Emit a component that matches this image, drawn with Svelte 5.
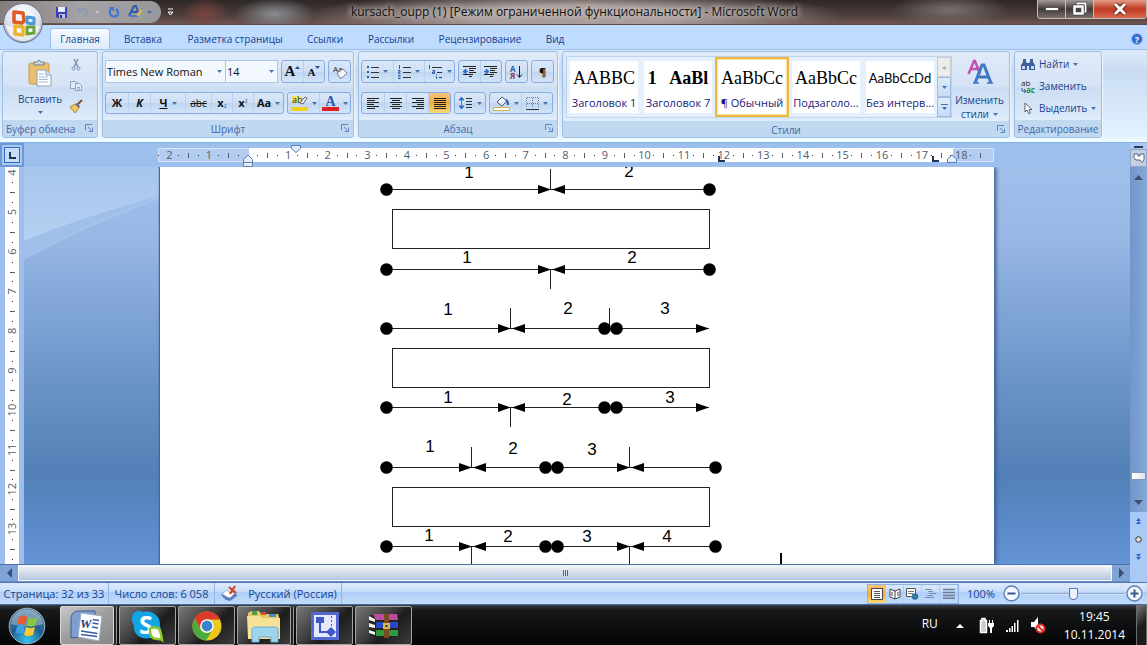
<script>
  const tabs = [
    { name: 'Главная', w: 60 },
    { name: 'Вставка', w: 62 },
    { name: 'Разметка страницы', w: 118 },
    { name: 'Ссылки', w: 58 },
    { name: 'Рассылки', w: 70 },
    { name: 'Рецензирование', w: 104 },
    { name: 'Вид', w: 42 }
  ];
  let active = $state('Главная');

  const styles = [
    { sample: 'AABBC', label: 'Заголовок 1', cls: 'serif' },
    { sample: '1   AaBl', label: 'Заголовок 7', cls: 'serif bold' },
    { sample: 'AaBbCc', label: '¶ Обычный', cls: 'serif', on: true },
    { sample: 'AaBbCc', label: 'Подзаголо...', cls: 'serif' },
    { sample: 'AaBbCcDd', label: 'Без интерв...', cls: 'sans' }
  ];

  const CM = 39.6;
  const ZERO = 90.5;
  const marks = (from, to) => {
    const out = [];
    for (let q = from * 4; q <= to * 4; q++) {
      const kind = q % 4 === 0 ? 'num' : q % 2 === 0 ? 'bar' : 'dot';
      if (q !== 0) out.push({ v: q / 4, kind });
    }
    return out;
  };
  const hMarks = marks(-2.25, 18.5);
  const vMarks = marks(4, 13.75);

  const figure = [
    {
      box: 209, top: 189, bottom: 269,
      dots: [386, 709], ticksUp: [551], ticksDown: [551],
      lines: [[386, 709]],
      right: [551], left: [551],
      up: [[469, 178, 1], [629, 177, 2]],
      down: [[467, 263, 1], [632, 263, 2]]
    },
    {
      box: 348, top: 328, bottom: 407,
      dots: [386, 604, 616], ticksUp: [511, 610], ticksDown: [511],
      lines: [[386, 709]],
      right: [511, 709], left: [511],
      up: [[448, 315, 1], [568, 314, 2], [665, 314, 3]],
      down: [[448, 403, 1], [567, 405, 2], [670, 403, 3]]
    },
    {
      box: 487, top: 467, bottom: 546,
      dots: [386, 545, 557, 715], ticksUp: [472, 630], ticksDown: [472, 630],
      lines: [[386, 715]],
      right: [472, 630], left: [472, 630],
      up: [[430, 452, 1], [513, 454, 2], [592, 455, 3]],
      down: [[429, 541, 1], [508, 542, 2], [587, 542, 3], [667, 542, 4]]
    }
  ];

  const apps = ['word', 'skype', 'chrome', 'explorer', 'editor', 'winrar'];
  let zoom = $state(100);
</script>

{#snippet caret()}
  <svg class="caret" width="5" height="3" viewBox="0 0 5 3"><path d="M0 0h5L2.500 3z" fill="#4673b0" /></svg>
{/snippet}

{#snippet launcher(label)}
  <button class="launch" aria-label={label}>
    <svg width="8" height="8" viewBox="0 0 8 8" fill="none" stroke="#5a86bf"><path d="M.5 6V.5H7M3 3l3.500 3.500M7.500 3.500v4h-4" /></svg>
  </button>
{/snippet}

{#snippet lines(rows, color = '#222')}
  <svg width="14" height="14" viewBox="0 0 14 14" stroke={color} shape-rendering="crispEdges">
    {#each rows as r, i}
      <line x1={r[0]} x2={r[1]} y1={i * 2 + 2.5} y2={i * 2 + 2.5} />
    {/each}
  </svg>
{/snippet}

<div class="app">
  <header class="title">
    <div class="quick">
      <button aria-label="Сохранить"><svg width="13" height="13" viewBox="0 0 13 13"><path d="M1 1h11v11H2l-1-1z" fill="#3c41b4" /><path d="M3 1h7v5H3z" fill="#e8ecfa" /><path d="M4 8h6v4H4z" fill="#b9c3e8" /><path d="M5 9h2v3H5z" fill="#2c2f80" /></svg></button>
      <button aria-label="Отменить"><svg width="14" height="12" viewBox="0 0 14 12"><path d="M3 5c3-3 8-2 8 1 0 2-2 4-4 5" fill="none" stroke="#8b9bb8" stroke-width="2" /><path d="M1 1v6h6z" fill="#8b9bb8" /></svg></button>
      <svg class="dim" width="5" height="3" viewBox="0 0 5 3"><path d="M0 0h5L2.500 3z" fill="#c4c6cc" /></svg>
      <button aria-label="Повторить"><svg width="12" height="12" viewBox="0 0 12 12"><path d="M3 3C0 7 3 11 6.500 10.500 11 10 11 5 8 3" fill="none" stroke="#3f78d0" stroke-width="2.200" /><path d="M1 1h5v5z" fill="#3f78d0" /></svg></button>
      <button aria-label="Стиль"><svg width="15" height="14" viewBox="0 0 15 14"><path d="M1 11L6 1h2l3 9M4 7h6" fill="none" stroke="#2f5caa" stroke-width="2" /><path d="M0 10h8l6-7 1 1-6 8H2z" fill="#4d7cc8" /><path d="M8 10l5-6 2 1-4 6z" fill="#e0b55a" /></svg></button>
      <svg class="near" width="5" height="3" viewBox="0 0 5 3"><path d="M0 0h5L2.500 3z" fill="#3f6db8" /></svg>
    </div>
    <button class="more" aria-label="Настройка панели"><svg width="7" height="8" viewBox="0 0 7 8"><path d="M1 1h5M1 4h5L3.500 7z" stroke="#fff" fill="#456" /></svg></button>
    <h1>kursach_oupp (1) [Режим ограниченной функциональности] - Microsoft Word</h1>
    <div class="winbtns">
      <button aria-label="Свернуть"><svg width="14" height="6" viewBox="0 0 14 6"><path d="M.5 1.500h13v3H.5z" fill="#fff" stroke="#555" /></svg></button>
      <button aria-label="Развернуть"><svg width="15" height="14" viewBox="0 0 15 14" fill="none"><path d="M5.500 3V1.500h8v8H12" stroke="#444" stroke-width="3.500" /><path d="M5.500 3V1.500h8v8H12" stroke="#fff" stroke-width="1.800" /><path d="M2.500 4.500h8v7h-8z" fill="#444" stroke="#444" stroke-width="4" /><path d="M2.500 4.500h8v7h-8z" stroke="#fff" stroke-width="2.500" /></svg></button>
      <button class="close" aria-label="Закрыть"><svg width="14" height="12" viewBox="0 0 14 12"><path d="M2 1l10 10M12 1L2 11" stroke="#6a1c14" stroke-width="5" /><path d="M2 1l10 10M12 1L2 11" stroke="#fff" stroke-width="3" /></svg></button>
    </div>
  </header>

  <button class="orb" aria-label="Кнопка Office">
    <svg width="42" height="42" viewBox="0 0 42 42">
      <defs>
        <radialGradient id="ob" cx=".5" cy=".3" r=".7"><stop offset="0" stop-color="#fff" /><stop offset=".6" stop-color="#dfe3ec" /><stop offset="1" stop-color="#9aa6bb" /></radialGradient>
      </defs>
      <circle cx="21" cy="21" r="19.500" fill="url(#ob)" stroke="#66748c" />
      <path d="M4 23c8 4 26 4 34 0-1 9-8 16-17 16S5 32 4 23z" fill="#fff" opacity=".7" />
      <g fill="none" stroke-width="3.500" stroke-linejoin="round">
        <path d="M21 11l-9-1v10l8 1 2-2z" stroke="#de5a26" />
        <path d="M25 15l7 1v6l-7-1z" stroke="#4a9ad8" stroke-width="3" />
        <path d="M13 24l8 1v8l-8-1z" stroke="#edb52f" />
        <path d="M25 25h7v6l-7 1z" stroke="#6aa43c" stroke-width="3" />
      </g>
    </svg>
  </button>

  <nav class="tabs">
    {#each tabs as t}
      <button class:on={t.name === active} style:flex-basis="{t.w}px" onclick={() => (active = t.name)}>{t.name}</button>
    {/each}
    <button class="help" aria-label="Справка"><svg width="12" height="12" viewBox="0 0 12 12"><circle cx="6" cy="6" r="5.500" fill="#2f6bd0" stroke="#9bb8e4" /><text x="6" y="9.500" font-size="9" font-weight="700" text-anchor="middle" fill="#fff">?</text></svg></button>
  </nav>

  <section class="ribbon">
    <div class="group clip">
      <div class="body">
        <button class="big">
          <svg width="26" height="28" viewBox="0 0 26 28"><rect x="2" y="4" width="20" height="21" rx="2" fill="#eac06c" stroke="#c89a48" /><path d="M7 6V3h3l2-2 2 2h3v3z" fill="#cdd3dc" stroke="#77808e" /><path d="M10 11h9l5 5v11H10z" fill="#fbfcff" stroke="#93a0b8" /><path d="M19 11v5h5" fill="#dbe3f2" stroke="#93a0b8" /><path d="M12 15h5M12 18h9M12 20.500h9M12 23h9" stroke="#a9b6cf" /></svg>
          <span>Вставить</span>
          {@render caret()}
        </button>
        <div class="stack">
          <button aria-label="Вырезать"><svg width="10" height="12" viewBox="0 0 10 12" fill="none" stroke="#7f93b3"><path d="M3 0l4 8M7 0L3 8" stroke-width="1.500" /><circle cx="2.500" cy="9.500" r="1.500" /><circle cx="7.500" cy="9.500" r="1.500" /></svg></button>
          <button aria-label="Копировать"><svg width="14" height="12" viewBox="0 0 14 12" fill="#e4ecf8" stroke="#8ea4c6"><path d="M1.500 1.500h5l2 2v5h-7z" /><path d="M6.500 3.500h4l2 2v5h-6z" /><path d="M8 7.500h3M8 9h3" /></svg></button>
          <button aria-label="Формат по образцу"><svg width="14" height="13" viewBox="0 0 14 13"><path d="M1 7l5-3 4 4-4 5z" fill="#efc75c" stroke="#b58a30" /><path d="M6 4l2-1 3 3-1 2z" fill="#5f6bb0" /><path d="M9 4l4-4" stroke="#7d4c25" stroke-width="2" /></svg></button>
        </div>
      </div>
      <footer>Буфер обмена{@render launcher('Буфер обмена')}</footer>
    </div>

    <div class="group font">
      <div class="body rows">
        <div class="row">
          <div class="combo">
            <select class="face" aria-label="Шрифт"><option>Times New Roman</option></select>
            <select class="size" aria-label="Размер шрифта"><option>14</option></select>
          </div>
          <div class="bar">
            <button class="w21 srf" aria-label="Увеличить размер">A<svg width="5" height="3" viewBox="0 0 5 3"><path d="M0 3h5L2.500 0z" fill="#2c4f94" /></svg></button>
            <button class="w21 srf sm" aria-label="Уменьшить размер">A<svg width="5" height="3" viewBox="0 0 5 3"><path d="M0 0h5L2.500 3z" fill="#2c4f94" /></svg></button>
          </div>
          <div class="bar"><button class="w21" aria-label="Очистить формат"><svg width="16" height="14" viewBox="0 0 16 14"><text x="1" y="7" font-size="8" fill="#222">Aa</text><path d="M5 8l6-4 4 4-5 5H8z" fill="#f4f6fc" stroke="#6f7fa8" /></svg></button></div>
        </div>
        <div class="row">
          <div class="bar">
            <button class="w22"><b>Ж</b></button>
            <button class="w22"><b><i>К</i></b></button>
            <button class="w35"><b><u>Ч</u></b>{@render caret()}</button>
            <button class="w26"><s>abc</s></button>
            <button class="w21" aria-label="Подстрочный"><b>x</b><sub>₂</sub></button>
            <button class="w21" aria-label="Надстрочный"><b>x</b><sub>²</sub></button>
            <button class="w30"><b>Aa</b>{@render caret()}</button>
          </div>
          <div class="bar">
            <button class="w31" aria-label="Цвет выделения"><svg width="17" height="16" viewBox="0 0 17 16"><path d="M0 1h11v7H0z" fill="#f7e36a" /><text x="1" y="8" font-size="9" fill="#222">ab</text><path d="M9 8l5-6 2 1-4 6z" fill="#fff" stroke="#55607e" /><path d="M0 12h17v4H0z" fill="#f0d020" /></svg>{@render caret()}</button>
            <button class="w31" aria-label="Цвет текста"><svg width="17" height="16" viewBox="0 0 17 16"><text x="8.500" y="11" font-size="14" font-weight="700" text-anchor="middle" font-family="Liberation Serif, serif" fill="#2c5aa8">A</text><path d="M0 12h17v4H0z" fill="#e02020" /></svg>{@render caret()}</button>
          </div>
        </div>
      </div>
      <footer>Шрифт{@render launcher('Шрифт')}</footer>
    </div>

    <div class="group para">
      <div class="body rows">
        <div class="row">
          <div class="bar">
            <button class="w31" aria-label="Маркеры"><svg width="12" height="13" viewBox="0 0 12 13" shape-rendering="crispEdges"><path d="M0 1h2v2H0zM0 6h2v2H0zM0 11h2v2H0z" fill="#2c5aa8" /><path d="M4 2.500h8M4 7.500h8M4 12.500h8" stroke="#333" /></svg>{@render caret()}</button>
            <button class="w31" aria-label="Нумерация"><svg width="13" height="14" viewBox="0 0 13 14"><path d="M1.500 0v4M0 5.500h2v1.500H.5v1.500H2.500M0 10.500h2.500M.5 12h2M0 13.500h2.500" stroke="#2c5aa8" fill="none" /><path d="M5 2.500h8M5 7.500h8M5 12.500h8" stroke="#333" shape-rendering="crispEdges" /></svg>{@render caret()}</button>
            <button class="w30" aria-label="Многоуровневый список"><svg width="15" height="14" viewBox="0 0 15 14"><path d="M1.500 0v4M4.500 5.500h2v3h-2V7h2M8.500 9.500v1M8.500 11.500v2.500" stroke="#2c5aa8" fill="none" /><path d="M4 2.500h10M9 7.500h5M11 12.500h3" stroke="#333" shape-rendering="crispEdges" /></svg>{@render caret()}</button>
          </div>
          <div class="bar">
            {#each [{ l: 'Уменьшить отступ', d: 'M5 6.500H1M3 4v5L0 6.500z' }, { l: 'Увеличить отступ', d: 'M0 6.500h4M2 4v5l3-2.500z' }] as b}
              <button class="w21" aria-label={b.l}><svg width="14" height="13" viewBox="0 0 14 13"><path d="M0 1.500h13M6 3.500h7M6 5.500h5M6 7.500h7M0 9.500h10M6 11.500h3" stroke="#222" shape-rendering="crispEdges" /><path d={b.d} fill="#2c6bd0" stroke="#2c6bd0" /></svg></button>
            {/each}
          </div>
          <div class="bar"><button class="w21" aria-label="Сортировка"><svg width="13" height="16" viewBox="0 0 13 16"><text x="0" y="8" font-size="8" font-weight="700" fill="#2c5aa8">А</text><text x="0" y="15" font-size="8" font-weight="700" fill="#9c3a3a">Я</text><path d="M9.500 2v11M7 10.500l2.500 3 2.500-3" stroke="#222" fill="none" /></svg></button></div>
          <div class="bar"><button class="w21"><b>¶</b></button></div>
        </div>
        <div class="row">
          <div class="bar">
            <button class="w22" aria-label="По левому краю">{@render lines([[1, 13], [1, 9], [1, 13], [1, 8], [1, 13], [1, 9]])}</button>
            <button class="w22" aria-label="По центру">{@render lines([[1, 13], [3, 11], [1, 13], [3, 11], [1, 13], [3, 11]])}</button>
            <button class="w22" aria-label="По правому краю">{@render lines([[1, 13], [5, 13], [1, 13], [6, 13], [1, 13], [5, 13]])}</button>
            <button class="w22 hot" aria-label="По ширине">{@render lines([[1, 13], [1, 13], [1, 13], [1, 13], [1, 13], [1, 13]])}</button>
          </div>
          <div class="bar"><button class="w30" aria-label="Интервал"><svg width="14" height="14" viewBox="0 0 14 14"><path d="M2.500 2v10M0 4l2.500-3L5 4zM0 10l2.500 3L5 10z" fill="#2c6bd0" stroke="#2c6bd0" stroke-width=".8" /><path d="M7 2.500h6M7 5.500h6M7 8.500h6M7 11.500h6" stroke="#333" shape-rendering="crispEdges" /></svg>{@render caret()}</button></div>
          <div class="bar">
            <button class="w31" aria-label="Заливка"><svg width="17" height="15" viewBox="0 0 17 15"><path d="M4 6l5-5 5 4-5 5z" fill="#eef2fb" stroke="#44506e" /><path d="M13 4c2 1 2 3 2 5" stroke="#2c5aa8" fill="none" stroke-width="2" /><path d="M.5 11.500h16v3H.5z" fill="#fff" stroke="#d0b448" /></svg>{@render caret()}</button>
            <button class="w31" aria-label="Границы"><svg width="13" height="13" viewBox="0 0 13 13" shape-rendering="crispEdges"><path d="M1 .5h11M1 6.500h11M.5 1v10M6.500 1v10M12.500 1v10" stroke="#6c7c9c" stroke-dasharray="1 1" /><path d="M0 12.500h13" stroke="#333" /></svg>{@render caret()}</button>
          </div>
        </div>
      </div>
      <footer>Абзац{@render launcher('Абзац')}</footer>
    </div>

    <div class="group styles">
      <div class="body">
        <div class="gallery">
          {#each styles as s}
            <button class="card" class:sel={s.on}>
              <span class="sample {s.cls}">{s.sample}</span>
              <span class="name">{s.label}</span>
            </button>
          {/each}
          <div class="gscroll">
            <button class="off" aria-label="Вверх"><svg width="5" height="3" viewBox="0 0 5 3"><path d="M0 3h5L2.500 0z" fill="#a5a9b0" /></svg></button>
            <button aria-label="Вниз">{@render caret()}</button>
            <button aria-label="Все стили"><svg width="7" height="6" viewBox="0 0 7 6"><path d="M0 0h7v1H0zM1 3h5L3.500 6z" fill="#4673b0" /></svg></button>
          </div>
        </div>
        <button class="big change">
          <svg width="26" height="26" viewBox="0 0 26 26" fill="none"><path d="M1.500 15L7 2h1l5 13M4 10h7" stroke="#c44fb0" stroke-width="2.500" /><path d="M8 24L15 6h2l7 18M11 18h10" stroke="#3f78c4" stroke-width="3" /><path d="M6 24h6M20 24h6" stroke="#3f78c4" stroke-width="1.500" /></svg>
          <span>Изменить</span>
          <span>стили {@render caret()}</span>
        </button>
      </div>
      <footer>Стили{@render launcher('Стили')}</footer>
    </div>

    <div class="group edit">
      <div class="body list">
        <button><svg width="14" height="12" viewBox="0 0 14 12" fill="#3e5f9c"><path d="M2 1h3v3l1 1h2l1-1V1h3v3l2 3v5H8V8H6v4H0V7l2-3z" /><path d="M1 8h3v3H1zM10 8h3v3h-3z" fill="#c6d8f2" /></svg>Найти {@render caret()}</button>
        <button><svg width="14" height="13" viewBox="0 0 14 13"><text x="0" y="6" font-size="8" fill="#222">ab</text><text x="5" y="13" font-size="8" font-weight="700" fill="#2f8a3c">ac</text><path d="M1 8v3h3M3 9l2 2-2 2" stroke="#2c5aa8" fill="none" /></svg>Заменить</button>
        <button><svg width="14" height="13" viewBox="0 0 14 13"><path d="M4 1v9l2-2 2 4 1.500-1L8 7.500h3z" fill="#fff" stroke="#5a6478" /></svg>Выделить {@render caret()}</button>
      </div>
      <footer>Редактирование</footer>
    </div>
  </section>

  <div class="work">
    <main>
      <div class="hruler">
        <button class="corner" aria-label="Тип табуляции"><span><svg width="7" height="7" viewBox="0 0 7 7"><path d="M1 0v6h6" fill="none" stroke="#1e3355" stroke-width="2" /></svg></span></button>
        <svg width="838" height="24" viewBox="0 0 838 24">
          <rect x=".5" y="5.500" width="835" height="13" fill="#b2cdf1" stroke="#d5e4f8" />
          <rect x="91" y="5" width="704" height="14" fill="#fff" />
          {#each hMarks as m}
            {@const x = ZERO + m.v * CM}
            {#if m.kind === 'num'}
              <text {x} y="16" text-anchor="middle">{Math.abs(m.v)}</text>
            {:else if m.kind === 'bar'}
              <rect x={Math.round(x) - 1} y="10" width="1" height="5" fill="#555b6a" />
            {:else}
              <rect x={Math.round(x) - 1} y="12" width="1" height="1" fill="#333" />
            {/if}
          {/each}
          <path d="M133.500 2.500h9v3l-4.500 4-4.500-4z" class="mk" />
          <path d="M90 12l4.500 4.500v7h-9v-7zM85.500 19.500h9" class="mk" />
          <path d="M794 12l4.500 4v3.500h-9V16z" class="mk" />
          <path d="M561 13v5h6M775 13v5h6" fill="none" stroke="#1e3355" stroke-width="2" />
        </svg>
      </div>
      <div class="canvas">
        <div class="vruler">
          <svg width="14" height="100%">
            {#each vMarks as m}
              {@const y = 5.5 + (m.v - 4) * CM}
              {#if m.kind === 'num'}
                <text x="11" {y} text-anchor="middle" transform="rotate(-90 11 {y})">{m.v}</text>
              {:else if m.kind === 'bar'}
                <rect x="5" y={Math.round(y)} width="5" height="1" fill="#555b6a" />
              {:else}
                <rect x="7" y={Math.round(y)} width="1" height="1" fill="#333" />
              {/if}
            {/each}
          </svg>
        </div>
        <div class="desk">
          <svg class="swoosh" width="136" height="200" viewBox="0 0 136 200">
            <defs><linearGradient id="sw" x1="0" y1="0" x2="0" y2="1"><stop offset="0" stop-color="#aac7ec" /><stop offset="1" stop-color="#bdd6f5" /></linearGradient></defs>
            <path d="M0 0h136v29C88 42 44 56 0 74z" fill="url(#sw)" opacity=".8" />
            <path d="M0 74C44 56 88 42 136 29v3C88 50 44 68 0 92z" fill="#a4c2ea" opacity=".7" />
            <path d="M0 92C44 68 88 48 136 31" fill="none" stroke="#aac8ee" />
          </svg>
          <article class="page">
            <svg width="834" height="397" viewBox="160 167 834 397">
              {#each figure as f}
                <rect x="392.500" y={f.box + 0.5} width="317" height="39" fill="none" stroke="#222" />
                {#each [{ y: f.top, t: f.ticksUp, d: -20, n: f.up }, { y: f.bottom, t: f.ticksDown, d: 20, n: f.down }] as r}
                  {#each f.lines as l}<path d="M{l[0]} {r.y + 0.5}H{l[1]}" stroke="#222" />{/each}
                  {#each r.t as x}<path d="M{x - 0.5} {r.y}v{r.d}" stroke="#222" />{/each}
                  {#each f.dots as x}<circle cx={x + 0.5} cy={r.y + 0.5} r="6.300" />{/each}
                  {#each f.right as x}<path d="M{x} {r.y + 0.5}l-13-4.500v9z" />{/each}
                  {#each f.left as x}<path d="M{x + 1} {r.y + 0.5}l13-4.500v9z" />{/each}
                  {#each r.n as n}<text x={n[0]} y={n[1]} text-anchor="middle">{n[2]}</text>{/each}
                {/each}
              {/each}
              <rect x="780" y="553" width="2" height="11" />
            </svg>
          </article>
        </div>
      </div>
      <div class="hscroll">
        <button aria-label="Влево"><svg width="5" height="10" viewBox="0 0 5 10"><path d="M5 0v10L0 5z" fill="#3a4d72" /></svg></button>
        <div class="hthumb"><i></i><i></i><i></i></div>
        <button aria-label="Вправо"><svg width="5" height="10" viewBox="0 0 5 10"><path d="M0 0v10l5-5z" fill="#3a4d72" /></svg></button>
      </div>
    </main>
    <aside>
      <div class="split"></div>
      <button class="toggle" aria-label="Линейка"><svg width="12" height="11" viewBox="0 0 12 11"><path d="M1 1h4v2h2V1h4v6L9 9.500 7 7H3L1 5z" fill="#fff" stroke="#56627c" /></svg></button>
      <div class="vtrack">
        <button aria-label="Вверх"><svg width="9" height="5" viewBox="0 0 9 5"><path d="M0 5h9L4.500 0z" fill="#3f4f74" /></svg></button>
        <div class="vthumb"></div>
        <button aria-label="Вниз"><svg width="9" height="5" viewBox="0 0 9 5"><path d="M0 0h9L4.500 5z" fill="#3f4f74" /></svg></button>
      </div>
      <div class="browse">
        <button aria-label="Предыдущая страница"><svg width="5" height="6" viewBox="0 0 5 6"><path d="M0 3h5L2.500 0zM0 6h5L2.500 3z" fill="#2f62c4" /></svg></button>
        <button aria-label="Выбор объекта"><svg width="7" height="7" viewBox="0 0 7 7"><circle cx="3.500" cy="3.500" r="2.800" fill="#ddd" stroke="#333" /></svg></button>
        <button aria-label="Следующая страница"><svg width="5" height="6" viewBox="0 0 5 6"><path d="M0 0h5L2.500 3zM0 3h5L2.500 6z" fill="#2f62c4" /></svg></button>
      </div>
    </aside>
  </div>

  <div class="status">
    <button class="s1">Страница: 32 из 33</button>
    <button class="s2">Число слов: 6 058</button>
    <button class="s3" aria-label="Правописание"><svg width="17" height="16" viewBox="0 0 17 16"><path d="M0 9l5-3 4 2 6-1 1 3-7 5-4-1z" fill="#5a7fc0" /><path d="M1 8l5-4 3 3 6-1-6 6-3-1z" fill="#fff" stroke="#8395b8" stroke-width=".7" /><path d="M8 1l7 6M14 0L9 8" stroke="#dc3c1c" stroke-width="2" /></svg></button>
    <button class="s4">Русский (Россия)</button>
    <div class="views">
      <button class="hot" aria-label="Разметка страницы"><svg width="12" height="12" viewBox="0 0 12 12"><path d="M.5.5h11v11H.5z" fill="#fff" stroke="#444" /><path d="M3 3.500h6M3 5.500h6M3 7.500h6M3 9.500h6" stroke="#555" /></svg></button>
      <button aria-label="Режим чтения"><svg width="12" height="12" viewBox="0 0 12 12" fill="#fff" stroke="#444"><path d="M6 3L1 1v8l5 2 5-2V1zM6 3v8M3 4v4M9 4v4" /></svg></button>
      <button aria-label="Веб-документ"><svg width="13" height="12" viewBox="0 0 13 12"><path d="M.5.5h9v8h-9z" fill="#fff" stroke="#555" /><path d="M2 3.500h6M2 5.500h5" stroke="#777" /><circle cx="9" cy="8.500" r="3.200" fill="#2f6bb0" /><path d="M7 8l2-1 2 3H9z" fill="#3aa04a" /></svg></button>
      <button aria-label="Структура"><svg width="11" height="11" viewBox="0 0 11 11" stroke="#7b8ca8"><path d="M0 1.500h7M3 3.500h5M4 5.500h7M2 7.500h6M0 9.500h9" /></svg></button>
      <button aria-label="Черновик"><svg width="12" height="11" viewBox="0 0 12 11" stroke="#6c7c98" stroke-width="1.500"><path d="M0 1.500h12M0 4.500h12M0 7.500h12M0 10.200h12" /></svg></button>
    </div>
    <button class="pct">{zoom}%</button>
    <button class="rnd" aria-label="Уменьшить"><svg width="17" height="17" viewBox="0 0 17 17"><circle cx="8.500" cy="8.500" r="7.500" fill="#f2f6fd" stroke="#5b7fb5" stroke-width="1.300" /><path d="M4.500 8.500h8" stroke="#3b5a8c" stroke-width="2" /></svg></button>
    <input type="range" min="0" max="200" bind:value={zoom} aria-label="Масштаб" />
    <button class="rnd" aria-label="Увеличить"><svg width="17" height="17" viewBox="0 0 17 17"><circle cx="8.500" cy="8.500" r="7.500" fill="#f2f6fd" stroke="#5b7fb5" stroke-width="1.300" /><path d="M4.500 8.500h8M8.500 4.500v8" stroke="#3b5a8c" stroke-width="2" /></svg></button>
  </div>

  <footer class="taskbar">
    <button class="start" aria-label="Пуск">
      <svg width="38" height="38" viewBox="0 0 38 38">
        <defs><radialGradient id="st" cx=".5" cy=".9" r=".9"><stop offset="0" stop-color="#35c4ee" /><stop offset=".5" stop-color="#1f5f92" /><stop offset="1" stop-color="#5f87a6" /></radialGradient></defs>
        <circle cx="19" cy="19" r="17.800" fill="url(#st)" stroke="#9fb4c4" />
        <path d="M3 17C4 8 11 2.500 19 2.500S34 8 35 17c-9 3-23 3-32 0z" fill="#fff" opacity=".3" />
        <path d="M11 10c3-2 5-2 8 0l-2 8c-3-2-6-2-8 0z" fill="#ea5a2a" />
        <path d="M20.500 10.500c3 1.500 6 1.500 9 0l-2 8c-3 1.500-6 1.500-9 0z" fill="#8cc63e" />
        <path d="M9 19.500c3-2 5-2 8 0l-2 8c-3-2-5-2-8 0z" fill="#3f9fe0" />
        <path d="M18 20c3 1.500 6 1.500 9 0l-2 8c-3 1.500-6 1.500-9 0z" fill="#fbc934" />
      </svg>
    </button>
    {#each apps as a}
      <button class="task" class:front={a === 'word'} class:pile={a === 'explorer' || a === 'word'} aria-label={a}>
        {#if a === 'word'}
          <svg width="34" height="32" viewBox="0 0 34 32"><path d="M1 28V9c0-5 3-8 8-8h16v24z" fill="#7f9fd0" stroke="#3a5b98" /><path d="M11 3l21 3-3 25-21-4z" fill="#fff" stroke="#9aaccc" /><path d="M23 9.500l6 1M22.500 13l6 1M22 17l6 1M11 21l16.500 2.500M11 24.500l16 2" stroke="#3b5ca4" stroke-width="1.500" /><text x="10" y="18" font-size="13" font-weight="700" font-style="italic" font-family="Liberation Serif, serif" fill="#24427e">W</text></svg>
        {:else if a === 'skype'}
          <svg width="34" height="32" viewBox="0 0 34 32"><path d="M1 8c0-7 7-8 11-6 9-2 18 4 17 14 3 7-2 13-9 12C9 30 2 24 3 15 1 13 1 10 1 8z" fill="#12a5e6" /><text x="15" y="24" font-size="25" font-weight="700" text-anchor="middle" fill="#fff">S</text><path d="M19 19c0-2 7-2 9 0 2 2 2 5 3 11-3-2-8 0-10-3-2-2-2-6-2-8z" fill="#fff" stroke="#8cc828" stroke-width="2.500" /></svg>
        {:else if a === 'chrome'}
          <svg width="30" height="30" viewBox="0 0 30 30"><circle cx="15" cy="15" r="14.500" fill="#ecc91c" /><path d="M2.500 7.700A14.500 14.500 0 0 1 28 8.500H15a7 7 0 0 0-6 10z" fill="#dc3a2c" /><path d="M2.400 7.700A14.500 14.500 0 0 0 14 29.500l6.500-10.500a7 7 0 0 1-11.800-.5z" fill="#4cab3e" /><circle cx="15" cy="15" r="6.800" fill="#fff" /><circle cx="15" cy="15" r="5.400" fill="#3b82cf" /></svg>
        {:else if a === 'explorer'}
          <svg width="36" height="34" viewBox="0 0 36 34"><path d="M2 4l3-2h8l2 3h17l1 3v22H2z" fill="#e8c765" /><path d="M6 2h5v4H6z" fill="#4aa04c" /><path d="M15 3h5v3h-5z" fill="#d84a32" /><path d="M23 5h7v3h-7z" fill="#4a8ad0" /><path d="M1 7h13l2 2h18v21H2z" fill="#f6e196" /><path d="M6 33V21c0-2 1-3 3-3h20c2 0 3 1 3 3v12h-7v-5H13v5z" fill="#9fd4ee" stroke="#6aaed2" /></svg>
        {:else if a === 'editor'}
          <svg width="30" height="30" viewBox="0 0 30 30"><path d="M1 1h28v28H1z" fill="#5468d0" /><path d="M4 4h22v22H4z" fill="#e3eaff" /><path d="M6 6h8v6H6z" fill="#3f56c4" /><path d="M10 12v9h8" stroke="#3f56c4" stroke-width="2" fill="none" /><path d="M21 16l5 5-5 5-5-5z" fill="#3f56c4" /><path d="M21.500 5v10" stroke="#3f56c4" stroke-dasharray="2 2" /></svg>
        {:else}
          <svg width="32" height="26" viewBox="0 0 32 26"><path d="M1 3l7-2 22 1v21l-20 2-9-3z" fill="#222" /><path d="M5 1l24 0 1 6H8z" fill="#c04a9c" /><path d="M8 9h22v6H8z" fill="#2848c8" /><path d="M8 17h22v6H8z" fill="#2f9a3c" /><path d="M1 3l6 3v3L1 7zM1 10l6 2v3l-6-1zM1 17l6 2v3l-6-2z" fill="#f4f4ee" /><path d="M16 1h5v24h-5z" fill="#7a4a22" /><path d="M15 10h7v6h-7z" fill="#d8b650" /><path d="M17.500 12h2v2h-2z" fill="#333" /></svg>
        {/if}
      </button>
    {/each}
    <div class="tray">
      <span class="lang">RU</span>
      <button class="up" aria-label="Скрытые значки"><svg width="8" height="4" viewBox="0 0 8 4"><path d="M0 4h8L4 0z" fill="#fff" /></svg></button>
      <button class="bat" aria-label="Питание"><svg width="16" height="17" viewBox="0 0 16 17"><path d="M1.500 3.500h1.500v-2h3v2h1.500v12h-6z" fill="#ccc" stroke="#fff" stroke-width="1.500" /><path d="M10.500 6V3M13.500 6V3" stroke="#fff" /><path d="M9 6h6v3l-2 2v5h-2v-5L9 9z" fill="#fff" /></svg></button>
      <button class="net" aria-label="Сеть"><svg width="13" height="12" viewBox="0 0 13 12" fill="#fff"><path d="M0 10h2v2H0zM3 8h1.500v4H3zM5.500 6H7v6H5.500zM8 3h1.500v9H8zM11 0h1.500v12H11z" /></svg></button>
      <button class="vol" aria-label="Громкость"><svg width="16" height="17" viewBox="0 0 16 17"><path d="M1 5h3l4-5v14L4 10H1z" fill="#fff" /><circle cx="10.500" cy="11.500" r="4" fill="#fff" stroke="#dc2c24" stroke-width="2" /><path d="M8 9l5 5" stroke="#dc2c24" stroke-width="2" /></svg></button>
      <time><span>19:45</span><span>10.11.2014</span></time>
      <button class="peek" aria-label="Свернуть все окна"></button>
    </div>
  </footer>
</div>

<style>
  :global(body) { margin: 0; }
  .app {
    position: relative; display: flex; flex-direction: column; min-height: 100vh; overflow: hidden;
    font: 10px/14px "Open Sans", "Noto Sans", sans-serif; color: #15428b; background: #bfdbff;
  }
  button { font: inherit; color: inherit; background: none; border: 0; padding: 0; margin: 0; display: flex; align-items: center; justify-content: center; white-space: nowrap; }
  svg { display: block; flex: none; overflow: visible; }
  .caret { margin-left: 4px; }

  .title {
    display: flex; height: 24px; border-bottom: 1px solid #5d4a48; align-items: center;
    background:
      radial-gradient(ellipse 40px 16px at 275px 14px, #8a8d92, transparent),
      radial-gradient(ellipse 24px 16px at 205px 14px, #7a4540, transparent),
      radial-gradient(ellipse 270px 26px at 575px 16px, #a89c9a 40%, transparent),
      radial-gradient(ellipse 60px 16px at 950px 10px, #77706f, transparent),
      linear-gradient(#2c2726, #4a3c3a 60%, #6e5451);
  }
  .quick { display: flex; align-items: center; gap: 8px; height: 22px; padding: 0 9px 0 55px; border-radius: 0 12px 12px 0; background: linear-gradient(90deg, #857d7c, #a4a2a5 50%, #98989c); }
  .quick .dim { margin-left: -3px; }
  .quick .near { margin-left: -4px; }
  .more { margin-left: 6px; }
  h1 { flex: 1; margin: 0; font: 12px/26px "Open Sans", sans-serif; color: #111; text-align: center; white-space: nowrap; padding-right: 62px; text-shadow: 0 0 6px #d8d0ce, 0 0 6px #d8d0ce; }
  .winbtns { display: flex; align-self: flex-start; height: 18px; border: 1px solid #c4bdbb; border-top: 0; border-radius: 0 0 4px 4px; overflow: hidden; }
  .winbtns button { width: 28px; background: linear-gradient(#a39b99, #3f3836 50%, #7c706c); border-right: 1px solid #c4bdbb; }
  .winbtns .close { width: 52px; border: 0; background: linear-gradient(#e39a88, #c03a22 50%, #d86a4c); }
  .orb { position: absolute; left: 2px; top: 2px; border-radius: 50%; }

  .tabs { display: flex; height: 24px; box-sizing: border-box; padding: 3px 4px 0 50px; gap: 2px; }
  .tabs button { flex: none; }
  .tabs .on { border: 1px solid #9ec2ee; border-bottom: 0; border-radius: 3px 3px 0 0; background: linear-gradient(#f4f9ff, #dfecfb); box-sizing: border-box; }
  .tabs .help { margin-left: auto; }

  .ribbon {
    display: flex; gap: 4px; padding: 1px 2px 4px; height: 87px; border-top: 1px solid #9cc0ec; border-bottom: 1px solid #86aee0;
    background: linear-gradient(#dbe8f8, #cfe0f5 18%, #c8dbf2 20%, #e3f2ff 94%, #f0ffff);
  }
  .group { flex: none; display: flex; flex-direction: column; box-sizing: border-box; border: 1px solid #9dbde3; border-radius: 3px; background: linear-gradient(#e0ebf9, #d5e3f5 40%, #cbddf3 42%, #deecfb 80%); box-shadow: 1px 1px 0 #f0f7ff; }
  .body { flex: 1; display: flex; }
  .group > footer { display: flex; height: 16px; align-items: center; justify-content: center; position: relative; padding-top: 1px; color: #3e6aaa; background: #c1d8f1; border-radius: 0 0 2px 2px; white-space: nowrap; }
  .launch { position: absolute; right: 4px; top: 4px; }
  .clip { width: 96px; }
  .clip > footer { justify-content: flex-start; padding-left: 3px; }
  .font { width: 252px; }
  .para { width: 200px; }
  .styles { width: 448px; }
  .edit { width: 88px; }
  .big { flex-direction: column; justify-content: flex-start; gap: 5px; padding: 7px 0 0 15px; }
  .big > .caret { margin: 0; }
  .stack { display: flex; flex-direction: column; padding: 6px 0 0 7px; gap: 8px; }
  .stack button { height: 13px; }
  .rows { flex-direction: column; gap: 9px; padding: 8px 0 0 2px; }
  .row { display: flex; gap: 3px; }
  .combo { display: flex; }
  select {
    appearance: none; box-sizing: border-box; height: 23px; border: 1px solid #a9c6ea; border-radius: 0; padding: 0 0 0 1px; color: #111; font: 11px "Open Sans", sans-serif;
    background: url("data:image/svg+xml,%3Csvg xmlns='http://www.w3.org/2000/svg' width='5' height='3'%3E%3Cpath d='M0 0h5L2.500 3z' fill='%234673b0'/%3E%3C/svg%3E") right 3px center no-repeat #f3f8ff;
  }
  .face { width: 121px; }
  .size { width: 52px; border-left: 0; }
  .bar { display: flex; height: 22px; box-sizing: border-box; border: 1px solid #88ace0; border-radius: 3px; background: linear-gradient(#d8e6f8, #cfe0f5 50%, #bfd5f0 52%, #d3e5f9); color: #111; }
  .row:first-child .bar { height: 23px; }
  .bar button + button { border-left: 1px solid #b9d0ee; box-sizing: border-box; }
  .bar button > b { font-size: 11px; }
  .bar sub { font-size: 9px; line-height: 9px; color: #2c5aa8; }
  .w21 { width: 21px; }
  .w22 { width: 22px; }
  .w26 { width: 26px; }
  .w30 { width: 30px; }
  .w31 { width: 31px; }
  .w35 { width: 35px; }
  .srf { font: bold 15px "Liberation Serif", serif; }
  .srf svg { align-self: flex-start; margin-top: 5px; }
  .srf.sm { font-size: 11px; }
  .hot { background: linear-gradient(#f5c57c, #f3ab3c 50%, #fbd978); }

  .styles .body { padding: 4px 2px 0 3px; }
  .gallery { display: flex; height: 62px; box-sizing: border-box; border: 1px solid #bed3ee; background: #e6f0fc; }
  .card { flex-direction: column; width: 74px; justify-content: flex-start; box-sizing: border-box; border: 3px solid #e6f0fc; border-width: 4px 3px; background: #fff; overflow: hidden; }
  .card.sel { border: 2px solid #eeb83e; box-shadow: inset 0 0 0 1px #fbe4a0; padding: 2px 1px; }
  .sample { display: block; height: 34px; color: #000; white-space: pre; }
  .serif { font: 18px/34px "Liberation Serif", serif; }
  .bold { font-weight: bold; }
  .sans { font: 13px/34px Lato, sans-serif; }
  .name { color: #1a1a7a; font-size: 11px; line-height: 16px; }
  .gscroll { display: flex; flex-direction: column; width: 14px; }
  .gscroll button { flex: 1; border: 1px solid #9dbde3; background: linear-gradient(#dfebfa, #c6dbf4); }
  .gscroll .off { background: #ececec; border-color: #ccc; }
  .gscroll .caret { margin: 0; }
  .change { padding: 3px 0 0; gap: 0; flex: 1; }
  .change > svg { margin: 0 0 8px; }
  .change span { display: flex; align-items: center; }
  .list { flex-direction: column; padding: 1px 0 0 6px; }
  .list button { justify-content: flex-start; height: 22px; gap: 4px; }
  .list .caret { margin: 0; }

  .work { flex: 1; display: flex; background: #a0c1ee; }
  main { flex: 1; display: flex; flex-direction: column; min-width: 0; }
  .hruler { display: grid; grid-template-columns: 24px 1fr; justify-items: center; height: 24px; background: #9dbfee; }
  .hruler text, .vruler text { font: 11px "Open Sans", sans-serif; fill: #555b6a; }
  .mk { fill: #e4ecf7; stroke: #5c7fb4; }
  .corner { width: 24px; height: 24px; border: 2px solid #6d97d6; box-sizing: border-box; background: #a9c8f1; }
  .corner span { display: flex; align-items: center; justify-content: center; width: 14px; height: 14px; border: 1px solid #2f6bc8; background: #c7dcf6; }
  .canvas { flex: 1; display: flex; }
  .vruler { width: 24px; box-sizing: border-box; padding-left: 5px; background: linear-gradient(90deg, #9dbfee 5px, #fff 5px, #fff 19px, #9dbfee 19px); position: relative; overflow: hidden; }
  .vruler svg { position: absolute; }
  .desk { flex: 1; position: relative; display: flex; justify-content: center; overflow: hidden; background: linear-gradient(#a0c0ec, #96b6e4 20%, #82a6d8 35%, #6a93c8 55%, #5280b6 78%, #5b8aca 90%, #6594d6); }
  .swoosh { position: absolute; left: 0; top: 0; }
  .page { width: 834px; overflow: hidden; background: #fff; box-shadow: 2px 0 4px #3a5a8a, -1px 0 1px #4a6898; position: relative; }
  .page text { font: 17px "Liberation Sans", sans-serif; }
  .page svg { overflow: hidden; }
  .hscroll { display: flex; height: 18px; box-sizing: border-box; border-top: 1px solid #4a70aa; border-bottom: 1px solid #6c8cbc; background: #7fa3d6; }
  .hscroll button { width: 18px; }
  .hthumb { flex: 1; display: flex; gap: 1px; align-items: center; justify-content: center; border: 1px solid #f4f8fd; background: linear-gradient(#f0f3f9, #d3deec 50%, #b3c6df); }
  .hthumb i { width: 1px; height: 6px; background: #667; }
  aside { width: 17px; display: flex; flex-direction: column; background: #a9caf6; }
  .split { height: 2px; margin: 3px 4px 1px; background: #2b3c5c; }
  .toggle { height: 18px; background: #c4cfe2; border: 1px solid #8ea6cc; }
  .vtrack { flex: 1; display: flex; flex-direction: column; background: linear-gradient(90deg, #7196ca, #86a8d8); }
  .vtrack button { height: 20px; }
  .vthumb { height: 8px; margin: auto 1px 12px; box-sizing: border-box; border: 1px solid #8296b8; background: linear-gradient(90deg, #fff, #dbe3f0); }
  .browse { height: 70px; display: flex; flex-direction: column; }
  .browse button { height: 18px; }

  .status { display: flex; align-items: center; height: 23px; box-sizing: border-box; border-top: 1px solid #4a78bc; border-bottom: 1px solid #466ea6; background: linear-gradient(#dfebfc, #c9defa 40%, #aecdf8 42%, #c2dcfb); white-space: nowrap; font-size: 11px; }
  .status .s1, .status .s2, .status .s3, .status .s4 { height: 100%; border-right: 1px solid #94b6e4; box-sizing: border-box; }
  .s1 { width: 109px; }
  .s2 { width: 106px; }
  .status .s3 { width: 29px; border: 0; }
  .s4 { width: 98px; }
  .views { display: flex; height: 20px; margin-left: auto; border: 1px solid #8fb2e2; box-sizing: border-box; }
  .views button { width: 18px; border-right: 1px solid #b4cef0; box-sizing: border-box; }
  .pct { margin: 0 8px; width: 28px; }
  input[type="range"] { appearance: none; width: 102px; height: 16px; margin: 0 2px; background: linear-gradient(#6b8fc4, #fff) center / 100% 2px no-repeat; }
  input[type="range"]::-webkit-slider-thumb { appearance: none; width: 9px; height: 12px; border: 1px solid #5478b0; border-radius: 1px 1px 5px 5px; background: #eaf1fc; }
  .rnd:last-child { margin-right: 4px; }

  .taskbar { display: flex; height: 41px; background: linear-gradient(#3b3d40, #17181a 12%, #0e0f10 50%, #050505); color: #fff; }
  .start { width: 60px; padding-right: 6px; }
  .task { position: relative; width: 57px; margin: 1px 2px 1px 0; box-sizing: border-box; border: 1px solid #a3a3a3; border-radius: 2px; background: linear-gradient(135deg, #777, #3a3a3a 45%, #1c1c1c 60%, #3c3c3c); }
  .task.front { background: linear-gradient(150deg, #c8c8c8, #9c9c9c 50%, #888); border-color: #d8d8d8; }
  .task.pile { width: 54px; margin-right: 5px; box-shadow: 2px 0 0 #222, 3px 0 0 #999; }
  .tray { display: flex; align-items: center; margin-left: auto; font: 12px "Open Sans", sans-serif; }
  .lang { margin-right: 18px; padding-bottom: 4px; }
  .up { margin-right: 15px; }
  .bat { margin-right: 11px; }
  .net { margin-right: 11px; }
  .vol { margin-right: 18px; }
  time { display: flex; flex-direction: column; align-items: center; line-height: 18px; margin-right: 11px; }
  .peek { align-self: stretch; width: 11px; border: 1px solid #6c6c6c; background: linear-gradient(135deg, #777, #1c1c1c 50%); box-sizing: border-box; }
</style>
